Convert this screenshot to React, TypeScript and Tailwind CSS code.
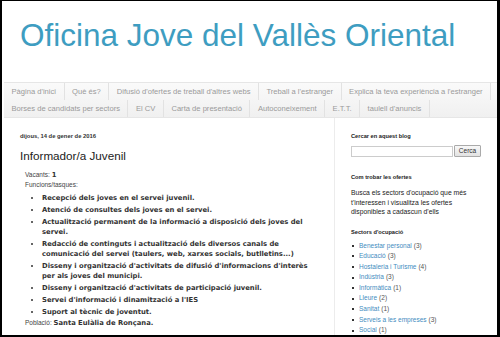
export default function App() {
  const tabs = [
    "Pàgina d'inici",
    "Què és?",
    "Difusió d'ofertes de treball d'altres webs",
    "Treball a l'estranger",
    "Explica la teva experiència a l'estranger",
    "Borses de candidats per sectors",
    "El CV",
    "Carta de presentació",
    "Autoconeixement",
    "E.T.T.",
    "taulell d'anuncis",
  ];
  const tasks = [
    "Recepció dels joves en el servei juvenil.",
    "Atenció de consultes dels joves en el servei.",
    "Actualització permanent de la informació a disposició dels joves del servei.",
    "Redacció de continguts i actualització dels diversos canals de comunicació del servei (taulers, web, xarxes socials, butlletins...)",
    "Disseny i organització d'activitats de difusió d'informacions d'interès per als joves del municipi.",
    "Disseny i organització d'activitats de participació juvenil.",
    "Servei d'informació i dinamització a l'IES",
    "Suport al tècnic de joventut.",
  ];
  const sectors: [string, number][] = [
    ["Benestar personal", 3],
    ["Educació", 3],
    ["Hostaleria i Turisme", 4],
    ["Indústria", 3],
    ["Informàtica", 1],
    ["Lleure", 2],
    ["Sanitat", 1],
    ["Serveis a les empreses", 3],
    ["Social", 1],
  ];
  return (
    <div className="w-[500px] h-[337px] overflow-hidden bg-white border-black border-l-2 border-t border-r-[3px] border-b-2 font-['Liberation_Sans',Arial,sans-serif]">
      <header className="h-[81px] pl-[18px] pt-[19px]">
        <h1 className="text-[31.5px] leading-none text-[#3e9dc1] font-normal">
          Oficina Jove del Vallès Oriental
        </h1>
      </header>
      <nav className="ml-[2px] border-y border-[#e6e6e6] bg-gradient-to-b from-[#fafafa] to-[#f0f0f0] flex flex-wrap">
        {tabs.map((t) => (
          <div
            key={t}
            className="h-[17px] px-[7.5px] flex items-center border-r border-[#e2e2e2] text-[7.6px] text-[#9a9a9a] whitespace-nowrap"
          >
            {t}
          </div>
        ))}
      </nav>
      <div className="flex h-[220px]">
        <main className="w-[333px] border-r border-[#ececec] pl-[18px] pt-[14px]">
          <div className="text-[5.85px] leading-[8px] font-bold text-[#333]">
            dijous, 14 de gener de 2016
          </div>
          <h2 className="mt-[9px] text-[11.7px] leading-[14px] text-[#222] font-normal">
            Informador/a Juvenil
          </h2>
          <div className="mt-[7px] pl-[5px] text-[6.5px] leading-[10px] text-[#444]">
            <div>
              Vacants:{" "}
              <b className="font-['DejaVu_Sans',Verdana,sans-serif] text-[6.8px] text-[#333]">1</b>
            </div>
            <div>Funcions/tasques:</div>
          </div>
          <ul className="mt-[3px] pl-[22px] list-disc flex flex-col gap-[2px] font-['DejaVu_Sans',Verdana,sans-serif] text-[6.8px] leading-[10px] font-bold text-[#333] marker:text-[#333]">
            {tasks.map((t) => (
              <li key={t} className="pr-[22px]">
                {t}
              </li>
            ))}
          </ul>
          <div className="mt-[1px] pl-[5px] text-[6.5px] leading-[10px] text-[#444]">
            Població:{" "}
            <b className="font-['DejaVu_Sans',Verdana,sans-serif] text-[6.8px] text-[#333]">
              Santa Eulàlia de Ronçana.
            </b>
          </div>
        </main>
        <aside className="flex-1 pl-[16px] pt-[14px]">
          <div className="text-[5.7px] leading-[8px] font-bold text-[#222]">
            Cercar en aquest blog
          </div>
          <div className="mt-[5px] flex items-center gap-[1px]">
            <div className="w-[102px] h-[11px] border border-[#ccc] bg-white" />
            <div className="w-[27px] h-[12px] border border-[#aaa] rounded-[1px] bg-gradient-to-b from-[#f8f8f8] to-[#e2e2e2] flex items-center justify-center text-[6.5px] text-[#333]">
              Cerca
            </div>
          </div>
          <div className="mt-[16px] text-[5.7px] leading-[8px] font-bold text-[#222]">
            Com trobar les ofertes
          </div>
          <p className="mt-[7px] pr-[20px] text-[6.8px] leading-[9.5px] text-[#222]">
            Busca els sectors d'ocupació que més t'interessen i visualitza les ofertes disponibles a cadascun d'ells
          </p>
          <div className="mt-[11px] text-[5.7px] leading-[8px] font-bold text-[#222]">
            Sectors d'ocupació
          </div>
          <ul className="mt-[5px] flex flex-col text-[6.5px] leading-[10.6px]">
            {sectors.map(([s, n]) => (
              <li key={s} className="flex items-center">
                <span className="w-[2px] h-[2px] bg-[#333] mr-[5px] ml-[1px]" />
                <span className="text-[#3f8cc0]">{s}</span>
                <span className="text-[#555] ml-[2px]">({n})</span>
              </li>
            ))}
          </ul>
        </aside>
      </div>
    </div>
  );
}
